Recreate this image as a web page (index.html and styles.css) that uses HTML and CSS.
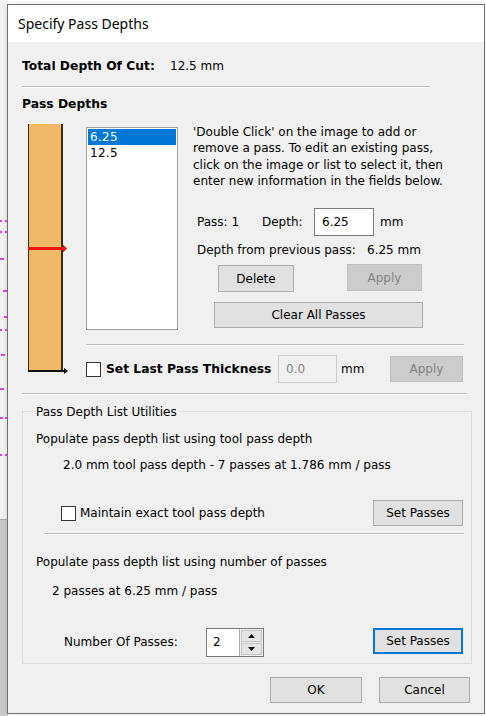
FILE: index.html
```
<!DOCTYPE html>
<html lang="en">
<head>
<meta charset="utf-8">
<title>Specify Pass Depths</title>
<link rel="stylesheet" href="styles.css">
</head>
<body>
<div class="backdrop">
  <svg class="marks" width="8" height="470" viewBox="0 0 8 470">
    <g fill="#e23fe2">
      <rect x="0" y="220" width="2" height="2"/><rect x="5" y="220" width="3" height="2"/>
      <rect x="0" y="231" width="2" height="2"/><rect x="5" y="231" width="3" height="2"/>
      <rect x="0" y="258" width="4" height="2"/>
      <rect x="3" y="290" width="4" height="2"/>
      <rect x="4" y="316" width="4" height="2"/>
      <rect x="0" y="329" width="2" height="2"/><rect x="5" y="329" width="3" height="2"/>
      <rect x="1" y="354" width="4" height="2"/>
      <rect x="0" y="388" width="4" height="2"/><rect x="7" y="388" width="1" height="2"/>
      <rect x="0" y="417" width="3" height="2"/><rect x="5" y="417" width="3" height="2"/>
      <rect x="0" y="454" width="2" height="2"/><rect x="5" y="454" width="3" height="2"/>
    </g>
  </svg>
  <div class="gray-block"></div>
</div>

<div class="window">
  <div class="titlebar">Specify Pass Depths</div>
  <div class="content">
    <div class="total-row"><span class="bold total-label">Total Depth Of Cut:</span><span>12.5 mm</span></div>
    <div class="sep sep-top"></div>
    <div class="bold heading">Pass Depths</div>

    <div class="depths">
      <svg class="depth-bar" width="64" height="268" viewBox="0 0 64 268">
        <rect x="6" y="12" width="34" height="248" fill="#f0b967"/>
        <rect x="6" y="12" width="1" height="248" fill="#3a2b14"/>
        <rect x="39" y="12" width="2" height="248" fill="#3a2b14"/>
        <rect x="6" y="258" width="38" height="2" fill="#111"/>
        <polygon points="42,256 46,259 42,262" fill="#111"/>
        <rect x="6" y="135" width="37" height="3" fill="#f01010"/>
        <polygon points="41,132.5 45,136.5 41,140.5" fill="#f01010"/>
      </svg>

      <div class="main-col">
        <div class="upper">
          <div class="listbox">
            <div class="item selected">6.25</div>
            <div class="item">12.5</div>
          </div>
          <div class="editor">
            <p class="hint">'Double Click' on the image to add or<br>remove a pass. To edit an existing pass,<br>click on the image or list to select it, then<br>enter new information in the fields below.</p>
            <div class="pass-row">
              <span class="lbl-pass">Pass: 1</span>
              <span class="lbl-depth">Depth:</span>
              <div class="field depth-field">6.25</div>
              <span class="unit">mm</span>
            </div>
            <div class="prev-row"><span class="prev-label">Depth from previous pass:</span><span>6.25 mm</span></div>
            <div class="btn-row">
              <button class="btn btn-delete">Delete</button>
              <button class="btn btn-apply disabled">Apply</button>
            </div>
            <button class="btn btn-clear">Clear All Passes</button>
          </div>
        </div>
        <div class="sep sep-mid"></div>
        <div class="last-row">
          <span class="checkbox"></span>
          <span class="bold last-label">Set Last Pass Thickness</span>
          <div class="field field-disabled last-field">0.0</div>
          <span class="unit last-unit">mm</span>
          <button class="btn btn-apply2 disabled">Apply</button>
        </div>
      </div>
    </div>

    <div class="sep sep-wide"></div>

    <div class="group">
      <div class="group-title">Pass Depth List Utilities</div>
      <div class="g-line g-pop1">Populate pass depth list using tool pass depth</div>
      <div class="g-line g-info1">2.0 mm tool pass depth - 7 passes at 1.786 mm / pass</div>
      <div class="g-row g-check-row">
        <span class="checkbox"></span>
        <span class="g-check-label">Maintain exact tool pass depth</span>
        <button class="btn btn-set">Set Passes</button>
      </div>
      <div class="sep sep-group"></div>
      <div class="g-line g-pop2">Populate pass depth list using number of passes</div>
      <div class="g-line g-info2">2 passes at 6.25 mm / pass</div>
      <div class="g-row g-num-row">
        <span class="num-label">Number Of Passes:</span>
        <div class="spinner">
          <span class="spin-value">2</span>
          <div class="spin-btns">
            <span class="spin-btn"><svg width="7" height="4" viewBox="0 0 7 4"><polygon points="0,4 3.5,0 7,4" fill="#111"/></svg></span>
            <span class="spin-btn"><svg width="7" height="4" viewBox="0 0 7 4"><polygon points="0,0 7,0 3.5,4" fill="#111"/></svg></span>
          </div>
        </div>
        <button class="btn btn-set btn-default">Set Passes</button>
      </div>
    </div>

    <div class="footer">
      <button class="btn btn-ok">OK</button>
      <button class="btn btn-cancel">Cancel</button>
    </div>
  </div>
</div>
</body>
</html>
```

FILE: styles.css
```
html, body {
  margin: 0;
  padding: 0;
  background: #ffffff;
}
body {
  width: 486px;
  height: 716px;
  overflow: hidden;
  position: relative;
  font-family: "DejaVu Sans", "Liberation Sans", sans-serif;
  font-size: 12px;
  color: #000;
}
.backdrop {
  position: absolute;
  left: 0;
  top: 0;
  width: 8px;
  height: 716px;
  background: #f2f2f2;
}
.marks {
  position: absolute;
  left: 0;
  top: 0;
  display: block;
}
.gray-block {
  position: absolute;
  left: 0;
  top: 519px;
  width: 8px;
  height: 197px;
  background: #c9c9c9;
  border-top: 1px solid #a9a9a9;
}
.window {
  position: relative;
  box-sizing: border-box;
  margin: 4px 0 0 7px;
  width: 478px;
  height: 710px;
  border: 1px solid #707070;
  background: #f0f0f0;
  display: flex;
  flex-direction: column;
  box-shadow: 0 0 6px rgba(0,0,0,0.12);
}
.titlebar {
  height: 37px;
  background: #ffffff;
  display: flex;
  align-items: center;
  padding-left: 10px;
  font-family: "Noto Sans", "Open Sans", sans-serif;
  font-size: 14px;
  color: #000;
}
.content {
  flex: 1;
  padding: 0 14px;
  display: flex;
  flex-direction: column;
}
.bold {
  font-weight: bold;
  font-size: 12.3px;
}
.total-row {
  margin-top: 16px;
  height: 16px;
  line-height: 16px;
  display: flex;
}
.total-label {
  width: 148px;
}
.sep {
  height: 1px;
  background: #bdbdbd;
  border-bottom: 1px solid #ffffff;
}
.sep-top {
  margin-top: 12px;
  width: 408px;
}
.heading {
  margin-top: 8px;
  height: 16px;
  line-height: 16px;
}
.depths {
  display: flex;
  align-items: flex-start;
}
.depth-bar {
  display: block;
  flex: none;
}
.main-col {
  display: flex;
  flex-direction: column;
}
.upper {
  display: flex;
  align-items: flex-start;
}
.listbox {
  margin-top: 15px;
  box-sizing: border-box;
  width: 92px;
  height: 203px;
  background: #fff;
  border: 1px solid #a0a0a0;
  padding: 1px;
}
.item {
  height: 16px;
  line-height: 16px;
  padding-left: 2px;
  letter-spacing: 0.3px;
}
.item.selected {
  background: #0078d7;
  color: #fff;
}
.editor {
  margin-left: 15px;
  margin-top: 12px;
  display: flex;
  flex-direction: column;
  align-items: flex-start;
}
.hint {
  margin: 0;
  line-height: 16.3px;
  white-space: nowrap;
}
.pass-row {
  margin-top: 19px;
  height: 28px;
  display: flex;
  align-items: center;
  padding-left: 4px;
}
.lbl-pass { width: 65px; }
.lbl-depth { width: 52px; }
.field {
  box-sizing: border-box;
  height: 28px;
  background: #fff;
  border: 1px solid #7a7a7a;
  display: flex;
  align-items: center;
  padding-left: 7px;
}
.depth-field {
  width: 60px;
}
.unit {
  margin-left: 6px;
}
.prev-row {
  margin-top: 6px;
  height: 16px;
  line-height: 16px;
  padding-left: 4px;
  display: flex;
}
.prev-label {
  width: 170px;
}
.btn {
  box-sizing: border-box;
  height: 27px;
  padding: 0;
  margin: 0;
  background: #e1e1e1;
  border: 1px solid #adadad;
  font-family: inherit;
  font-size: 12px;
  color: #000;
}
.btn.disabled {
  background: #cccccc;
  border-color: #bfbfbf;
  color: #838383;
}
.btn-row {
  margin-top: 7px;
  display: flex;
  align-items: flex-start;
}
.btn-delete {
  margin-left: 25px;
  width: 76px;
}
.btn-apply {
  margin-left: 53px;
  margin-top: -1px;
  width: 75px;
}
.btn-clear {
  margin-top: 10px;
  margin-left: 21px;
  width: 209px;
  height: 26px;
}
.sep-mid {
  margin-top: 14px;
  width: 378px;
}
.last-row {
  margin-top: 9px;
  height: 28px;
  display: flex;
  align-items: center;
}
.checkbox {
  box-sizing: border-box;
  width: 15px;
  height: 15px;
  background: #fff;
  border: 1px solid #333;
  flex: none;
}
.last-label {
  margin-left: 5px;
  width: 172px;
}
.last-field {
  width: 59px;
}
.field-disabled {
  background: #f0f0f0;
  border-color: #cccccc;
  color: #838383;
}
.last-unit {
  margin-left: 4px;
  width: 49px;
}
.btn-apply2 {
  width: 73px;
  height: 26px;
}
.sep-wide {
  margin-top: 10px;
  width: 445px;
}
.group {
  box-sizing: border-box;
  margin-top: 16px;
  width: 450px;
  height: 253px;
  border: 1px solid #dcdcdc;
  padding: 0 8px 0 13px;
  display: flex;
  flex-direction: column;
}
.group-title {
  margin-top: -8px;
  margin-left: -3px;
  padding: 0 3px;
  height: 16px;
  line-height: 16px;
  background: #f0f0f0;
  align-self: flex-start;
}
.g-line {
  height: 16px;
  line-height: 16px;
  white-space: nowrap;
}
.g-pop1 { margin-top: 11px; }
.g-info1 { margin-top: 10px; margin-left: 27px; }
.g-row {
  display: flex;
  align-items: center;
}
.g-check-row {
  margin-top: 27px;
  height: 26px;
}
.g-check-row .checkbox {
  margin-left: 25px;
}
.g-check-label {
  margin-left: 4px;
}
.btn-set {
  margin-left: auto;
  width: 90px;
  height: 26px;
}
.sep-group {
  margin-top: 7px;
  margin-left: 8px;
  width: 420px;
}
.g-pop2 { margin-top: 19px; }
.g-info2 { margin-top: 13px; margin-left: 16px; }
.g-num-row {
  margin-top: 29px;
  height: 29px;
  align-items: flex-start;
}
.num-label {
  margin-left: 28px;
  width: 142px;
  line-height: 29px;
}
.spinner {
  box-sizing: border-box;
  width: 58px;
  height: 29px;
  background: #fff;
  border: 1px solid #7a7a7a;
  display: flex;
}
.spin-value {
  flex: 1;
  padding-left: 6px;
  line-height: 27px;
}
.spin-btns {
  width: 21px;
  display: flex;
  flex-direction: column;
  border-left: 1px solid #adadad;
  background: #f0f0f0;
  padding: 1px;
  gap: 1px;
}
.spin-btn {
  flex: 1;
  background: #e5e5e5;
  border: 1px solid #c4c4c4;
  display: flex;
  align-items: center;
  justify-content: center;
}
.spin-btn svg { display: block; }
.btn-default {
  border-color: #0078d7;
  box-shadow: inset 0 0 0 1px #0078d7;
}
.footer {
  margin-top: 13px;
  display: flex;
  justify-content: flex-end;
}
.btn-ok {
  width: 92px;
  height: 26px;
}
.btn-cancel {
  margin-left: 17px;
  width: 91px;
  height: 26px;
}
```
